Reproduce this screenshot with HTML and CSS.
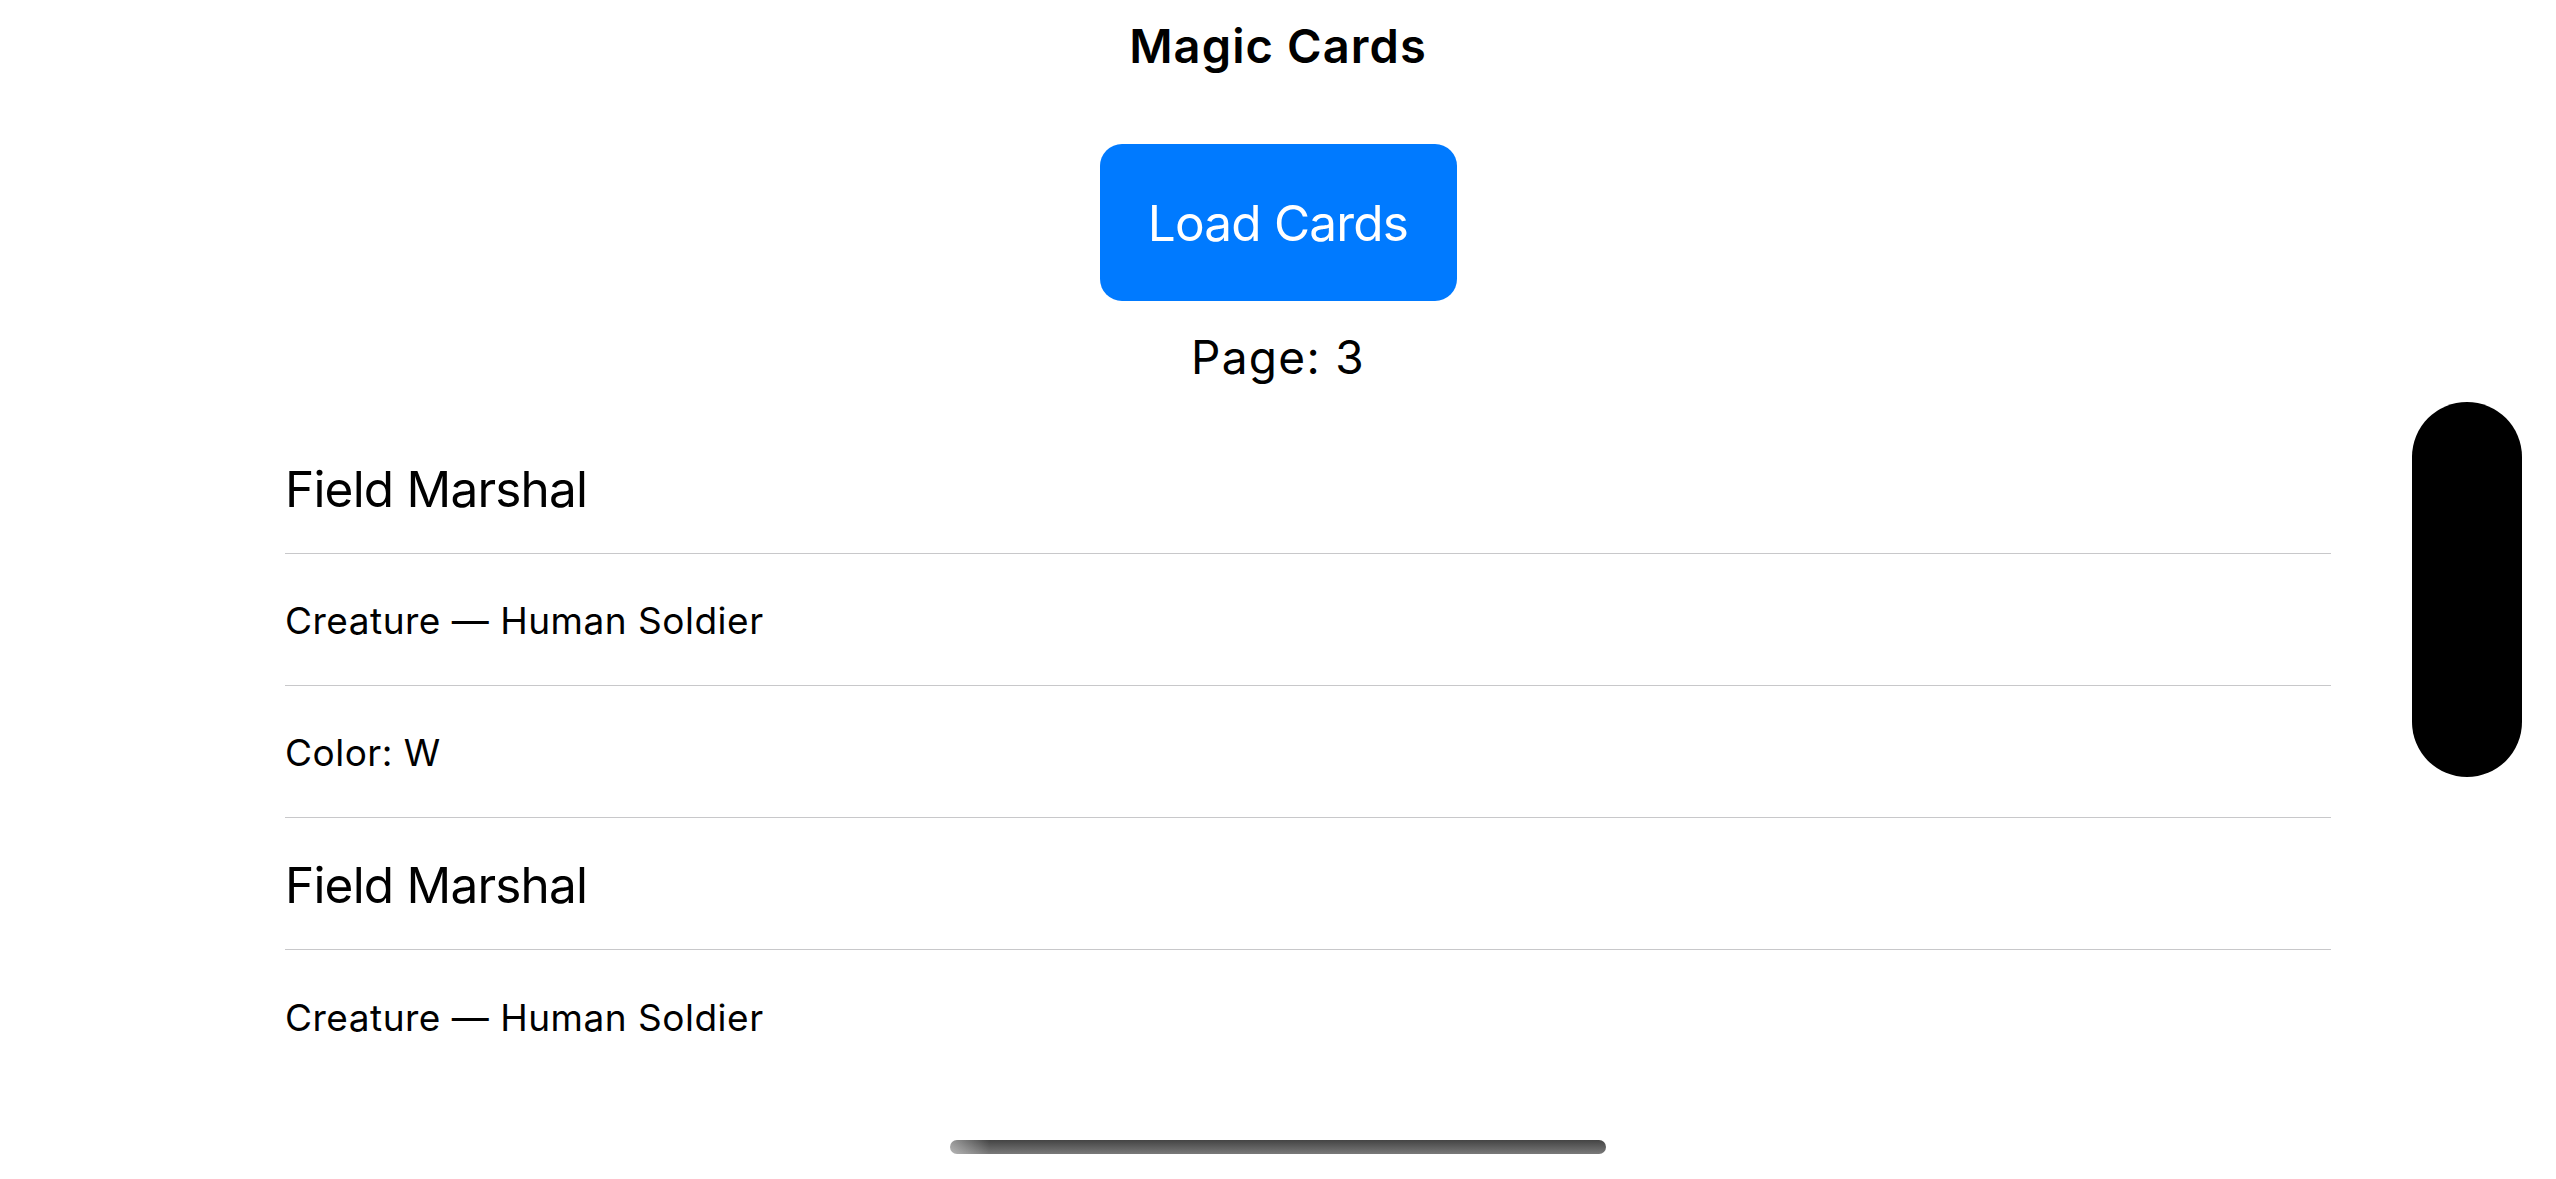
FILE: index.html
```html
<!DOCTYPE html>
<html lang="en">
<head>
<meta charset="utf-8">
<title>Magic Cards</title>
<link rel="stylesheet" href="styles.css">
</head>
<body>
<div class="screen">
  <h1 class="title">Magic Cards</h1>
  <button class="load-btn" type="button">Load Cards</button>
  <div class="page-label">Page: 3</div>
  <ul class="card-list">
    <li class="row row-name">Field Marshal</li>
    <li class="row row-detail">Creature — Human Soldier</li>
    <li class="row row-detail">Color: W</li>
    <li class="row row-name">Field Marshal</li>
    <li class="row row-detail">Creature — Human Soldier</li>
  </ul>
  <div class="island"></div>
  <div class="home-indicator"></div>
</div>
</body>
</html>
```

FILE: styles.css
```css
html, body {
  margin: 0;
  padding: 0;
  background: #ffffff;
}

body {
  font-family: Inter, "Noto Sans", "Liberation Sans", sans-serif;
  color: #000000;
}

.screen {
  position: relative;
  width: 2556px;
  height: 1179px;
  overflow: hidden;
  display: flex;
  flex-direction: column;
  align-items: center;
  padding-top: 16px;
  box-sizing: border-box;
}

.title {
  margin: 0;
  font-size: 47px;
  font-weight: 600;
  line-height: 60px;
  letter-spacing: 1.1px;
}

.load-btn {
  margin-top: 68px;
  width: 357px;
  height: 157px;
  border: none;
  border-radius: 22px;
  background: #007aff;
  color: #ffffff;
  font-family: inherit;
  font-size: 49.5px;
  font-weight: 400;
  letter-spacing: -0.8px;
  padding: 0;
  display: flex;
  align-items: center;
  justify-content: center;
}

.page-label {
  margin-top: 28px;
  font-size: 46px;
  line-height: 56px;
  letter-spacing: 1.3px;
}

.card-list {
  list-style: none;
  margin: 37px 225px 0 285px;
  padding: 0;
  align-self: stretch;
  display: flex;
  flex-direction: column;
}

.row {
  height: 132px;
  box-sizing: border-box;
  padding-top: 4px;
  border-bottom: 1px solid #c8c8ca;
  display: flex;
  align-items: center;
  line-height: 1.2;
}

.row:last-child {
  border-bottom: none;
}

.row-name {
  font-size: 49.5px;
  letter-spacing: -0.8px;
}

.row-detail {
  font-size: 37px;
  letter-spacing: 0.5px;
}

.island {
  position: absolute;
  left: 2412px;
  top: 402px;
  width: 110px;
  height: 375px;
  border-radius: 55px;
  background: #000000;
}

.home-indicator {
  position: absolute;
  left: 950px;
  top: 1140px;
  width: 656px;
  height: 14px;
  border-radius: 7px;
  background:
    linear-gradient(to right, rgba(255,255,255,0.45), rgba(255,255,255,0) 6%),
    linear-gradient(to bottom, #444444, #7a7a7a);
}
```
